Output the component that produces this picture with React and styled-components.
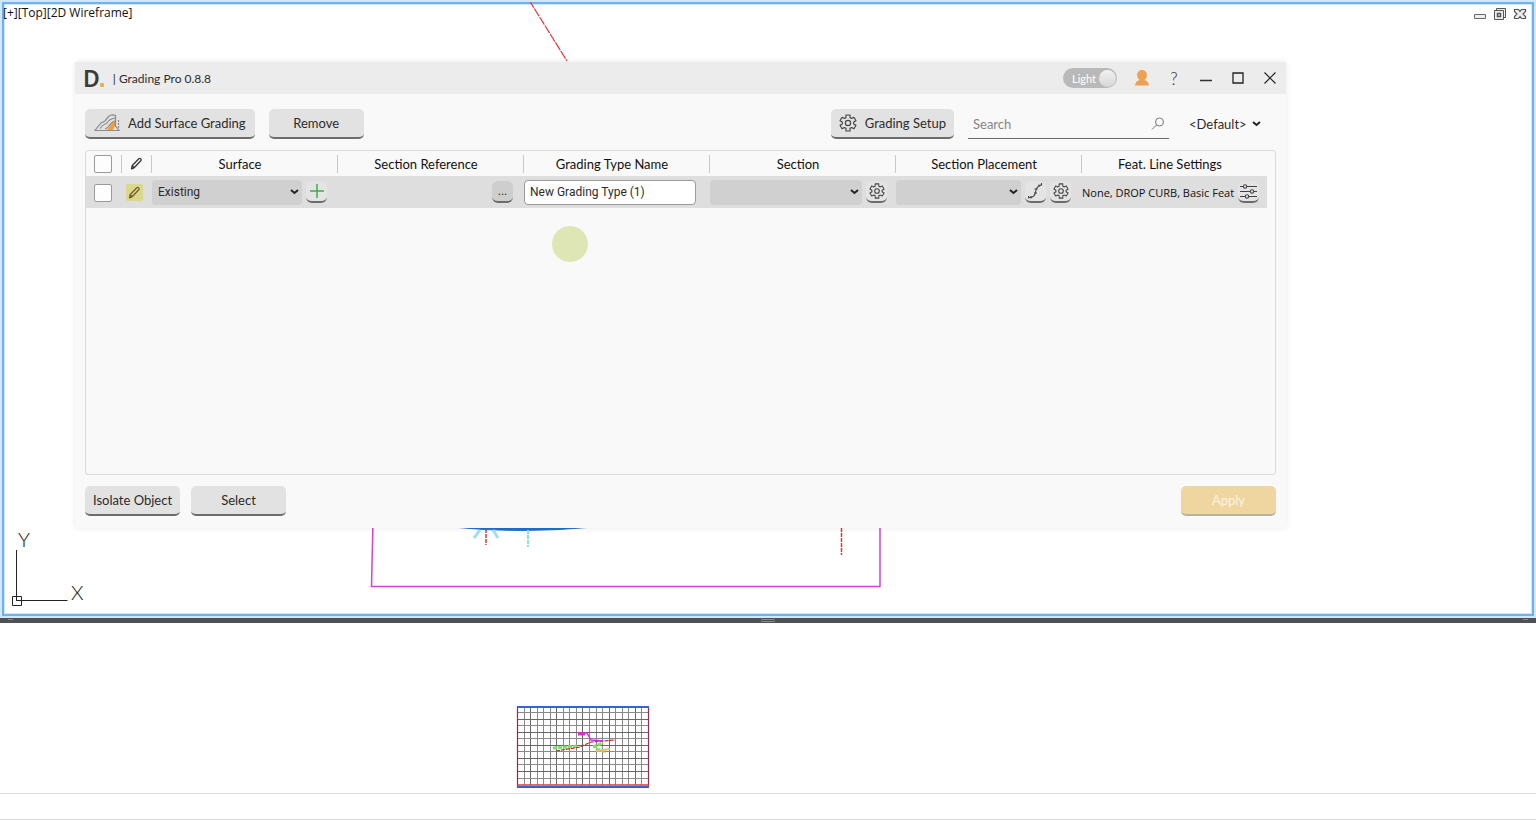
import React, { useState } from 'react';
import styled, { createGlobalStyle } from 'styled-components';

const GlobalStyle = createGlobalStyle`
  * {
    box-sizing: border-box;
  }

  body {
    margin: 0;
    background: #fff;
    font-family: 'Lato', 'Open Sans', sans-serif;
    color: #2b2b2b;
  }

  button, input, select {
    font-family: inherit;
    color: inherit;
  }
`;

const Page = styled.div`
  position: relative;
  display: flex;
  flex-direction: column;
  min-height: 100vh;
  overflow: hidden;
`;

const Viewport = styled.section`
  position: relative;
  flex: 1;
  min-height: 560px;
  border: 2px solid #cfe8fb;
  box-shadow: inset 0 0 0 2px #6fb0ee, inset 0 0 0 3px #cfe6fb;
`;

const ViewportBar = styled.div`
  display: flex;
  justify-content: space-between;
  padding: 3px 7px 0 1px;
`;

const ViewportLabel = styled.span`
  font-family: 'Open Sans', sans-serif;
  font-size: 12px;
  line-height: 16px;
  color: #111;
`;

const ViewportButtons = styled.div`
  display: flex;
  gap: 6px;
  padding-top: 2px;
`;

const PlainButton = styled.button`
  display: flex;
  align-items: center;
  justify-content: center;
  width: ${({ $size }) => $size || 14}px;
  height: ${({ $size }) => $size || 14}px;
  padding: 0;
  border: none;
  background: none;
  font-size: 17px;
  font-weight: 300;
  cursor: pointer;
`;

const Drawing = styled.svg`
  position: absolute;
  top: 0;
  left: 0;
  width: 100%;
  height: 100%;
  pointer-events: none;
`;

const UcsIcon = styled.svg`
  position: absolute;
  left: 8px;
  bottom: 5px;
  width: 90px;
  height: 90px;
`;

const Splitter = styled.div`
  display: flex;
  align-items: center;
  justify-content: space-between;
  height: 5px;
  padding: 0 8px;
  background: #4f5054;
`;

const SplitterGrip = styled.span`
  width: ${({ $wide }) => ($wide ? 14 : 5)}px;
  height: 3px;
  border-top: 1px solid #86878a;
  border-bottom: ${({ $wide }) => ($wide ? '1px solid #86878a' : 'none')};
`;

const ModelPane = styled.section`
  position: relative;
  height: 171px;
  border-bottom: 1px solid #dfdfdf;
`;

const Overview = styled.svg`
  position: absolute;
  left: 516px;
  top: 82px;
  width: 134px;
  height: 84px;
`;

const StatusStrip = styled.footer`
  height: 26px;
  border-bottom: 1px solid #dcdcdc;
`;

const Dialog = styled.main`
  position: absolute;
  top: 62px;
  left: 75px;
  right: 250px;
  background: #f9f9f9;
  box-shadow: 0 0 6px rgba(0, 0, 0, 0.09);
`;

const TitleBar = styled.header`
  display: flex;
  align-items: center;
  height: 32px;
  padding: 0 8px;
  background: #ececec;
`;

const Logo = styled.span`
  display: flex;
  align-items: baseline;
  font-family: 'Noto Sans', sans-serif;
  font-size: 23px;
  font-weight: 600;
  line-height: 30px;
  color: #3b3b38;

  &::after {
    content: '';
    width: 4px;
    height: 4px;
    border-radius: 1px;
    background: #efa94a;
  }
`;

const Title = styled.h1`
  flex: 1;
  margin: 0 0 0 9px;
  font-size: 12px;
  font-weight: 400;
`;

const TitleControls = styled.div`
  display: flex;
  align-items: center;
  gap: 16px;
`;

const ThemeToggle = styled.label`
  display: flex;
  align-items: center;
  width: 54px;
  height: 20px;
  margin-right: 1px;
  padding: 0 0 0 9px;
  border-radius: 10px;
  background: #b9b9b9;
  color: #fff;
  font-size: 11px;
  cursor: pointer;

  input {
    appearance: none;
    width: 17px;
    height: 17px;
    margin: 0 1px 0 auto;
    border-radius: 50%;
    background: linear-gradient(#f2f2f2, #d6d6d6);
  }
`;

const Body = styled.div`
  padding: 15px 10px 12px;
`;

const Toolbar = styled.div`
  display: flex;
  align-items: center;
  gap: 14px;
  margin-bottom: 11px;
`;

const Spacer = styled.div`
  flex: 1;
`;

const Button = styled.button`
  display: flex;
  align-items: center;
  justify-content: center;
  gap: 8px;
  min-width: 95px;
  height: 30px;
  padding: 0 ${({ $pad }) => $pad || 0}px;
  border: none;
  border-bottom: 2px solid #6c6c6c;
  border-radius: 5px;
  background: #e2e2e2;
  font-size: 13px;
  white-space: nowrap;
  cursor: pointer;
`;

const ApplyButton = styled(Button)`
  background: #efd6a0;
  border-bottom-color: #b5b3a6;
  color: #fbf3e2;
`;

const SearchBox = styled.label`
  display: flex;
  align-items: center;
  width: 201px;
  height: 30px;
  padding: 0 4px 0 5px;
  border-bottom: 1px solid #6a6a6a;

  input {
    flex: 1;
    min-width: 0;
    padding: 0;
    border: none;
    outline: none;
    background: none;
    font-size: 13px;
  }

  input::placeholder {
    color: #858585;
    opacity: 1;
  }
`;

const SelectBox = styled.span`
  display: grid;
  flex: ${({ $plain }) => ($plain ? 'none' : 1)};
  align-items: center;
  min-width: 0;
  margin: 0 ${({ $plain }) => ($plain ? 15 : 0)}px 0 ${({ $plain }) => ($plain ? 6 : 0)}px;

  select, svg {
    grid-area: 1 / 1;
  }

  select {
    appearance: none;
    width: 100%;
    height: 25px;
    padding: 0 ${({ $plain }) => ($plain ? 14 : 18)}px 0 ${({ $plain }) => ($plain ? 0 : 6)}px;
    border: none;
    border-radius: 4px;
    background: ${({ $plain }) => ($plain ? 'none' : '#d0d0d0')};
    font-size: ${({ $plain }) => ($plain ? 13 : 12)}px;
  }

  svg {
    justify-self: end;
    margin-right: ${({ $plain }) => ($plain ? 0 : 3)}px;
    pointer-events: none;
  }
`;

const TableFrame = styled.div`
  min-height: 325px;
  padding-right: 8px;
  border: 1px solid #d9dcdc;
  border-radius: 3px;
`;

const Table = styled.table`
  width: 100%;
  table-layout: fixed;
  border-collapse: collapse;

  th, td {
    padding: 0;
    text-align: left;
  }
`;

const HeadCell = styled.th`
  width: ${({ $width }) => ($width ? `${$width}px` : 'auto')};
  height: 25px;
  font-size: 13px;
  font-weight: 400;
  color: #111;

  & + & {
    background: linear-gradient(#c9c9c9, #c9c9c9) left 4px / 1px 18px no-repeat;
  }
`;

const HeadLabel = styled.span`
  display: flex;
  align-items: center;
  justify-content: center;
  padding-right: ${({ $shift }) => $shift || 0}px;
`;

const Row = styled.tr`
  height: 32px;
  background: #dedede;
`;

const Cell = styled.div`
  display: flex;
  align-items: center;
  gap: 4px;
  padding: 0 ${({ $end }) => $end || 8}px 0 1px;
  font-family: 'Roboto', 'Open Sans', sans-serif;
  font-size: 12px;
`;

const CheckBox = styled.input`
  appearance: none;
  width: 18px;
  height: 18px;
  margin: 0 0 0 8px;
  border: 1px solid #9a9a9a;
  border-radius: 2px;
  background: #fdfdfd;
  vertical-align: middle;
`;

const EditMark = styled.button`
  display: flex;
  align-items: center;
  justify-content: center;
  width: 17px;
  height: 17px;
  margin-left: 5px;
  padding: 0;
  border: none;
  border-radius: 2px;
  background: #d8d98a;
`;

const SmallButton = styled.button`
  display: flex;
  flex: none;
  align-items: center;
  justify-content: center;
  width: 21px;
  height: 22px;
  margin-left: ${({ $end }) => ($end ? 'auto' : 0)};
  padding: 0;
  border: none;
  border-bottom: 2px solid #6c6c6c;
  border-radius: 6px;
  background: ${({ $dark }) => ($dark ? '#cecece' : '#e4e4e4')};
  font-size: 12px;
  cursor: pointer;
`;

const NameInput = styled.input`
  width: 172px;
  height: 25px;
  padding: 0 5px;
  border: 1px solid #9b9b9b;
  border-radius: 4px;
  background: #fff;
  font-size: 12px;
`;

const FeatureText = styled.span`
  flex: 1;
  min-width: 0;
  margin-right: -4px;
  white-space: nowrap;
  font-family: 'Open Sans', sans-serif;
  font-size: 11px;
  color: #111;
`;

const Footer = styled.div`
  display: flex;
  gap: 11px;
  margin-top: 11px;
`;

const CursorHalo = styled.div`
  position: absolute;
  top: 226px;
  left: 552px;
  width: 36px;
  height: 36px;
  border-radius: 50%;
  background: #dfe6b6;
  pointer-events: none;
`;

const Chevron = () => (
  <svg width="9" height="6" viewBox="0 0 9 6" fill="none" stroke="#222" strokeWidth="2">
    <path d="M1 1l3.5 3L8 1" />
  </svg>
);

const Pencil = ({ color = '#333' }) => (
  <svg width="13" height="13" viewBox="0 0 13 13" fill="none" stroke={color} strokeWidth="1.3" strokeLinejoin="round">
    <path d="M1.500 11.800l.6-3L8.800 1.800q1-.8 1.900.1t.1 1.900l-6.700 7zM2.100 8.800l2 2" />
  </svg>
);

// outline of a six-toothed wheel, centred in a 20x20 box
const gearPoints = Array.from({ length: 6 }, (_, i) => i * 60 - 90)
  .flatMap((a) => [[a - 21, 6.4], [a - 14, 9.2], [a + 14, 9.2], [a + 21, 6.4]])
  .map(([a, r]) => {
    const rad = (a * Math.PI) / 180;
    return `${(10 + r * Math.cos(rad)).toFixed(2)},${(10 + r * Math.sin(rad)).toFixed(2)}`;
  })
  .join(' ');

const Gear = ({ size = 18 }) => (
  <svg width={size} height={size} viewBox="0 0 20 20" fill="none" stroke="#444" strokeWidth="1.3" strokeLinejoin="round">
    <polygon points={gearPoints} />
    <circle cx="10" cy="10" r="2.9" />
  </svg>
);

const Surface = () => (
  <svg width="26" height="18" viewBox="0 0 26 18" fill="none" stroke="#8b8b8b" strokeWidth="1.2">
    <path d="M13 16l3-4 2-4 4-2v4l-3 6z" fill="#efa03c" stroke="none" />
    <path d="M1 16.500h24L21.500 12V1.500q-4-1.500-7 1Q12 5.500 11 7L7 9z" />
    <path d="M6 14.500q3-4 7-5.500 2-4 8-5M11 15q3-1 5-4.500 2-3 5-3.500" />
    <path d="M24.500 6v8" strokeDasharray="2 1" />
  </svg>
);

const COLUMNS = [
  'Surface',
  'Section Reference',
  'Grading Type Name',
  'Section',
  'Section Placement',
  'Feat. Line Settings',
];

const App = () => {
  const [name, setName] = useState('New Grading Type (1)');
  const [search, setSearch] = useState('');

  return (
    <Page>
      <GlobalStyle />

      <Viewport>
        <Drawing>
          <path d="M527 -2L565 59" stroke="#e03a3a" strokeWidth="1.2" strokeDasharray="9 1" />
          <path d="M371 520L369.500 584.500H878V520" fill="none" stroke="#d83fd0" strokeWidth="1.500" />
          <path d="M450 525q66 7 142 0z" fill="#1f6fd0" stroke="#1f6fd0" />
          <path d="M478 528l-6 8M491 528l5 8" stroke="#9fe0f2" strokeWidth="3" />
          <path d="M526 528v17" stroke="#84e8cf" strokeWidth="2" strokeDasharray="4 1" />
          <path d="M484 527v16M839.500 526v27" stroke="#d63a3a" strokeWidth="1.500" strokeDasharray="4 1" />
        </Drawing>
        <ViewportBar>
          <ViewportLabel>[+][Top][2D Wireframe]</ViewportLabel>
          <ViewportButtons>
            <PlainButton aria-label="Minimize viewport">
              <svg width="14" height="14" fill="#eee" stroke="#666"><path d="M1.500 7.500h11v4h-11z" /></svg>
            </PlainButton>
            <PlainButton aria-label="Restore viewport">
              <svg width="14" height="14" fill="#eee" stroke="#555">
                <path d="M3.500 1.500h9v9h-9z" />
                <path d="M1.500 3.500h9v9h-9z" />
                <path d="M4.500 6.500h3v3h-3z" strokeWidth="1.500" />
              </svg>
            </PlainButton>
            <PlainButton aria-label="Close viewport">
              <svg width="14" height="14" fill="#eee" stroke="#555" strokeWidth="1.200">
                <path d="M1.500 2.500h4L7 4.500l1.500-2h4v2L10 7l2.500 2.500v2h-4L7 9.500l-1.500 2h-4v-2L4 7 1.500 4.500z" />
              </svg>
            </PlainButton>
          </ViewportButtons>
        </ViewportBar>
        <UcsIcon viewBox="0 0 90 90" fill="none" stroke="#222" strokeWidth="1">
          <path d="M6.500 29v51M6.500 79.500h51M2.500 75.500h9v9h-9z" />
          <text x="8" y="26" fill="#111" stroke="none" fontSize="20" fontFamily="Lato" fontWeight="300">Y</text>
          <text x="61" y="79" fill="#111" stroke="none" fontSize="20" fontFamily="Lato" fontWeight="300">X</text>
        </UcsIcon>
      </Viewport>

      <Splitter>
        <SplitterGrip />
        <SplitterGrip $wide />
        <SplitterGrip />
      </Splitter>

      <ModelPane>
        <Overview viewBox="0 0 134 84" fill="none">
          {Array.from({ length: 19 }, (_, i) => (
            <path key={`v${i}`} d={`M${Math.floor(8 + i * 6.55) + 0.5} 2v78`} stroke={i % 4 === 1 ? '#666' : '#8a8a8a'} />
          ))}
          {Array.from({ length: 11 }, (_, i) => (
            <path key={`h${i}`} d={`M2 ${Math.floor(7.5 + i * 6.55) + 0.5}h130`} stroke={i % 2 ? '#666' : '#8a8a8a'} />
          ))}
          <path d="M1.500 2v80M132.500 2v80" stroke="#9c2450" strokeWidth="1.200" />
          <path d="M1 2h132M1 82h132" stroke="#2f68c8" strokeWidth="1.800" />
          <path d="M1 80h132" stroke="#d83a3a" strokeWidth="1.500" />
          <path d="M37 43l25-2M77 42l10-4M80 44l10 3" stroke="#7be063" strokeWidth="3" strokeDasharray="4 1" />
          <path d="M80 46l14-2" stroke="#e8c070" strokeWidth="2" />
          <path d="M40 46l24-4 11-5 24-2" stroke="#d02c2c" strokeWidth="1.200" strokeDasharray="4 1" />
          <path d="M62 28h9l4 7 12 1" stroke="#d42fd0" strokeWidth="1.500" />
          <path d="M62 29h7" stroke="#d42fd0" strokeWidth="3" />
        </Overview>
      </ModelPane>
      <StatusStrip />

      <Dialog>
        <TitleBar>
          <Logo>D</Logo>
          <Title>| Grading Pro 0.8.8</Title>
          <TitleControls>
            <ThemeToggle>
              Light
              <input type="checkbox" role="switch" defaultChecked />
            </ThemeToggle>
            <PlainButton $size={16} aria-label="Account">
              <svg width="16" height="16" viewBox="0 0 16 16" fill="#efa152">
                <path d="M8 0a5 5 0 0 1 5 5q0 3-2.500 5 4 1 4.500 5.500H1q.500-4.500 4.500-5.500Q3 8 3 5a5 5 0 0 1 5-5z" />
              </svg>
            </PlainButton>
            <PlainButton $size={16}>?</PlainButton>
            <PlainButton $size={16} aria-label="Minimize">
              <svg width="16" height="16" stroke="#333" strokeWidth="1.500"><path d="M2 10.500h12" /></svg>
            </PlainButton>
            <PlainButton $size={16} aria-label="Maximize">
              <svg width="16" height="16" stroke="#222" strokeWidth="1.300" fill="none"><path d="M3 3h10v10H3z" /></svg>
            </PlainButton>
            <PlainButton $size={16} aria-label="Close">
              <svg width="16" height="16" stroke="#222" strokeWidth="1.200"><path d="M2.500 2.500l11 11M13.500 2.500l-11 11" /></svg>
            </PlainButton>
          </TitleControls>
        </TitleBar>

        <Body>
          <Toolbar>
            <Button $pad={9}>
              <Surface />
              Add Surface Grading
            </Button>
            <Button>Remove</Button>
            <Spacer />
            <Button $pad={8}>
              <Gear />
              Grading Setup
            </Button>
            <SearchBox>
              <input
                type="text"
                placeholder="Search"
                aria-label="Search"
                value={search}
                onChange={(e) => setSearch(e.target.value)}
              />
              <svg width="14" height="14" viewBox="0 0 14 14" fill="none" stroke="#777">
                <circle cx="8.500" cy="5" r="4" />
                <path d="M5.500 8L1 12.500" />
              </svg>
            </SearchBox>
            <SelectBox $plain>
              <select aria-label="Profile">
                <option>&lt;Default&gt;</option>
              </select>
              <Chevron />
            </SelectBox>
          </Toolbar>

          <TableFrame>
            <Table>
              <thead>
                <tr>
                  <HeadCell $width={35}>
                    <CheckBox type="checkbox" aria-label="Select all" />
                  </HeadCell>
                  <HeadCell $width={30}>
                    <HeadLabel><Pencil /></HeadLabel>
                  </HeadCell>
                  {COLUMNS.map((label) => (
                    <HeadCell key={label}>
                      <HeadLabel $shift={8}>{label}</HeadLabel>
                    </HeadCell>
                  ))}
                </tr>
              </thead>
              <tbody>
                <Row>
                  <td><CheckBox type="checkbox" aria-label="Select row" /></td>
                  <td><EditMark aria-label="Edit row"><Pencil color="#7a5a30" /></EditMark></td>
                  <td>
                    <Cell $end={10}>
                      <SelectBox>
                        <select aria-label="Surface"><option>Existing</option></select>
                        <Chevron />
                      </SelectBox>
                      <SmallButton aria-label="Add surface">
                        <svg width="14" height="14" stroke="#3fae49" strokeWidth="1.500"><path d="M7 0v14M0 7h14" /></svg>
                      </SmallButton>
                    </Cell>
                  </td>
                  <td>
                    <Cell $end={10}><SmallButton $end $dark>...</SmallButton></Cell>
                  </td>
                  <td>
                    <Cell>
                      <NameInput
                        type="text"
                        aria-label="Grading Type Name"
                        value={name}
                        onChange={(e) => setName(e.target.value)}
                      />
                    </Cell>
                  </td>
                  <td>
                    <Cell>
                      <SelectBox>
                        <select aria-label="Section" />
                        <Chevron />
                      </SelectBox>
                      <SmallButton aria-label="Section settings"><Gear size={16} /></SmallButton>
                    </Cell>
                  </td>
                  <td>
                    <Cell $end={10}>
                      <SelectBox>
                        <select aria-label="Section Placement" />
                        <Chevron />
                      </SelectBox>
                      <SmallButton aria-label="Pick alignment">
                        <svg width="15" height="16" viewBox="0 0 15 16" fill="none" stroke="#444" strokeWidth="1.100">
                          <path d="M1 14.500q6 0 6.500-5.500T14 1.500" />
                          <path d="M.5 13v2.500M3 13v2.500M6 10h3M6.500 6h3M11 1.500v2M13.500 0v2.500" />
                        </svg>
                      </SmallButton>
                      <SmallButton aria-label="Placement settings"><Gear size={16} /></SmallButton>
                    </Cell>
                  </td>
                  <td>
                    <Cell>
                      <FeatureText>None, DROP CURB, Basic Feat</FeatureText>
                      <SmallButton aria-label="Feature line settings">
                        <svg width="17" height="15" viewBox="0 0 17 15" fill="none" stroke="#444" strokeWidth="1.100">
                          <path d="M0 2.500h3M7 2.500h10M0 7.500h10M14 7.500h3M0 12.500h5M9 12.500h8" />
                          <circle cx="5" cy="2.500" r="1.700" />
                          <circle cx="12" cy="7.500" r="1.700" />
                          <circle cx="7" cy="12.500" r="1.700" />
                        </svg>
                      </SmallButton>
                    </Cell>
                  </td>
                </Row>
              </tbody>
            </Table>
          </TableFrame>

          <Footer>
            <Button>Isolate Object</Button>
            <Button>Select</Button>
            <Spacer />
            <ApplyButton>Apply</ApplyButton>
          </Footer>
        </Body>
      </Dialog>

      <CursorHalo />
    </Page>
  );
};

export default App;
